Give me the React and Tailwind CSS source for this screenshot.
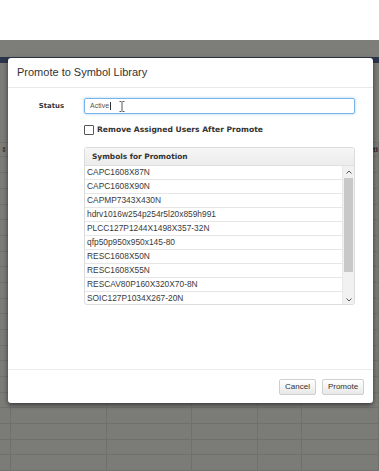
import React from "react";

const cols = [11, 96, 85, 66, 44, 77];

function GridRow({ h = "h-[16.25px]" }) {
  return (
    <div className={`flex ${h} border-b border-[#70716d]`}>
      {cols.map((w, i) => (
        <div key={i} style={{ width: w }} className="shrink-0 border-r border-[#70716d]" />
      ))}
    </div>
  );
}

const symbols = [
  "CAPC1608X87N",
  "CAPC1608X90N",
  "CAPMP7343X430N",
  "hdrv1016w254p254r5l20x859h991",
  "PLCC127P1244X1498X357-32N",
  "qfp50p950x950x145-80",
  "RESC1608X50N",
  "RESC1608X55N",
  "RESCAV80P160X320X70-8N",
  "SOIC127P1034X267-20N",
];

export default function App() {
  return (
    <div className="relative w-[379px] h-[471px] overflow-hidden bg-white font-['Liberation_Sans',Arial,sans-serif]">
      <div className="h-[40px] bg-white" />
      <div className="flex flex-col h-[431px] bg-[#7b7c78]">
        <div className="h-[18px] bg-[#7d7e7a]" />
        <div className="h-[6px] bg-[#2c3549]" />
        <div className="h-[82px]" />
        <div className="flex h-[16px] border-b border-[#70716d] border-t">
          {cols.map((w, i) => (
            <div key={i} style={{ width: w }} className="shrink-0 border-r border-[#70716d] flex items-center">
              {i === 0 && <span className="text-[7px] text-[#222] pl-[1px]">⇕</span>}
              {i === 5 && <span className="ml-[71px] text-[8px] font-bold text-[#222]">ti</span>}
            </div>
          ))}
        </div>
        {Array.from({ length: 20 }).map((_, i) => (
          <GridRow key={i} />
        ))}
      </div>

      {/* Modal */}
      <div className="absolute left-[8px] top-[58px] w-[365px] h-[345px] bg-white rounded-[3px] shadow-[0_2px_5px_rgba(0,0,0,0.55)] flex flex-col">
        <div className="h-[30px] shrink-0 flex items-center pl-[9px] border-b border-[#e8e8e8]">
          <span className="text-[11px] text-[#333]">Promote to Symbol Library</span>
        </div>
        <div className="flex-1 flex flex-col pt-[10px]">
          <div className="flex items-center h-[16px]">
            <div className="w-[76px] pr-[20px] text-right font-['DejaVu_Sans',sans-serif] font-bold text-[6.9px] text-[#333]">
              Status
            </div>
            <div className="relative w-[271px] h-[16px] border border-[#78b4e6] rounded-[2px] shadow-[0_0_3px_rgba(102,175,233,0.6)] flex items-center pl-[5px]">
              <span className="text-[7px] text-[#555]">Active</span>
              <span className="w-px h-[8px] bg-[#333] ml-[0.5px]" />
              <svg className="absolute left-[34px] top-[2px]" width="6" height="11" viewBox="0 0 6 11">
                <path d="M0.5 0.5h2M3.5 0.5h2M3 1v9M0.5 10.5h2M3.5 10.5h2" stroke="#555" strokeWidth="1" fill="none" />
              </svg>
            </div>
          </div>
          <div className="flex items-center h-[10px] mt-[11px] ml-[76px]">
            <div className="w-[10px] h-[10px] border border-[#555] rounded-[1px] bg-white" />
            <span className="ml-[3px] font-['DejaVu_Sans',sans-serif] font-bold text-[7.6px] text-[#333]">
              Remove Assigned Users After Promote
            </span>
          </div>
          <div className="ml-[76px] mt-[12px] w-[271px] h-[158px] border border-[#dcdcdc] rounded-[3px] flex flex-col overflow-hidden">
            <div className="h-[18px] shrink-0 bg-gradient-to-b from-[#f6f6f6] to-[#ececec] border-b border-[#e0e0e0] flex items-center pl-[7px]">
              <span className="font-['DejaVu_Sans',sans-serif] font-bold text-[7.4px] text-[#333]">Symbols for Promotion</span>
            </div>
            <div className="flex flex-1">
              <div className="flex-1 flex flex-col">
                {symbols.map((s) => (
                  <div key={s} className="h-[14px] shrink-0 border-b border-[#e6e6e6] flex items-center pl-[2px]">
                    <span className="text-[8.4px] text-[#3a3a3a] leading-none">{s}</span>
                  </div>
                ))}
              </div>
              <div className="w-[12px] shrink-0 bg-[#f1f1f1] flex flex-col border-l border-[#e8e8e8]">
                <div className="h-[12px] flex items-center justify-center">
                  <svg width="6" height="4" viewBox="0 0 6 4">
                    <path d="M0.5 3.5L3 1l2.5 2.5" stroke="#555" strokeWidth="1" fill="none" />
                  </svg>
                </div>
                <div className="h-[94px] bg-[#c8c8c8] mx-[1px]" />
                <div className="flex-1" />
                <div className="h-[12px] flex items-center justify-center">
                  <svg width="6" height="4" viewBox="0 0 6 4">
                    <path d="M0.5 0.5L3 3l2.5-2.5" stroke="#555" strokeWidth="1" fill="none" />
                  </svg>
                </div>
              </div>
            </div>
          </div>
        </div>
        <div className="h-[34px] shrink-0 border-t border-[#ececec] flex items-start justify-end pt-[9px] pr-[9px] gap-[6px]">
          <button className="w-[37px] h-[16px] rounded-[2px] border border-[#cfcfcf] bg-gradient-to-b from-white to-[#e8e8e8] text-[8px] text-[#333] flex items-center justify-center">
            Cancel
          </button>
          <button className="w-[42px] h-[16px] rounded-[2px] border border-[#cfcfcf] bg-gradient-to-b from-white to-[#e8e8e8] text-[8px] text-[#333] flex items-center justify-center">
            Promote
          </button>
        </div>
      </div>
    </div>
  );
}
